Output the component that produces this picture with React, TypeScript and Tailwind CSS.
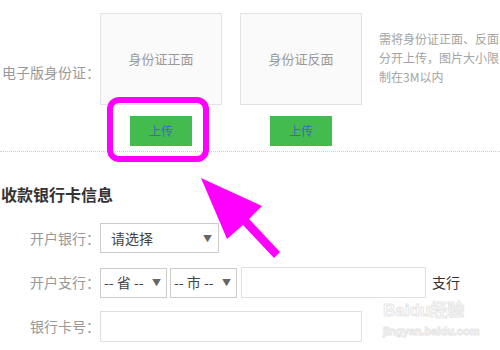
const font = "font-['Microsoft_YaHei','Noto_Sans_CJK_SC',sans-serif]";

function Caret() {
  return <span className="text-[9px] text-[#666] leading-none">▼</span>;
}

function UploadCol({ label }: { label: string }) {
  return (
    <div className="w-[122px] shrink-0 flex flex-col items-center">
      <div className="w-full h-[92px] border border-[#e3e3e3] bg-[#fafafa] flex items-center justify-center text-[13px] text-[#999]">
        {label}
      </div>
      <div className="mt-[11px] w-[62px] h-[30px] bg-[#43bb4f] flex items-center justify-center text-[12px] text-[#3f63d6]">
        上传
      </div>
    </div>
  );
}

export default function App() {
  return (
    <div className={`relative w-[500px] h-[350px] overflow-hidden bg-white ${font}`}>
      {/* 身份证上传 */}
      <div className="flex pt-[13px] h-[152px] border-b border-dotted border-[#cfcfcf]">
        <div className="w-[100px] shrink-0 pl-[2px] pt-[49px] text-[14px] leading-[20px] text-[#999] whitespace-nowrap">
          电子版身份证：
        </div>
        <UploadCol label="身份证正面" />
        <div className="w-[18px] shrink-0" />
        <UploadCol label="身份证反面" />
        <div className="ml-[17px] shrink-0 pt-[16px] text-[12px] leading-[19px] text-[#a3a3a3] whitespace-nowrap">
          需将身份证正面、反面
          <br />
          分开上传，图片大小限
          <br />
          制在3M以内
        </div>
      </div>

      {/* 收款银行卡信息 */}
      <div className="mt-[30px] pl-[1px] text-[16px] leading-[24px] font-bold text-[#333]">收款银行卡信息</div>

      <div className="mt-[17px] flex items-center h-[30px]">
        <div className="w-[100px] text-right text-[14px] text-[#999]">开户银行：</div>
        <div className="w-[119px] h-[30px] border border-[#ccc] flex items-center justify-between pl-[10px] pr-[6px] text-[14px] text-[#444]">
          请选择
          <Caret />
        </div>
      </div>

      <div className="mt-[14px] flex items-center h-[31px]">
        <div className="w-[100px] text-right text-[14px] text-[#999]">开户支行：</div>
        <div className="w-[67px] h-[30px] border border-[#ccc] flex items-center justify-between pl-[3px] pr-[5px] text-[14px] text-[#444]">
          -- 省 --
          <Caret />
        </div>
        <div className="ml-[3px] w-[67px] h-[30px] border border-[#ccc] flex items-center justify-between pl-[3px] pr-[5px] text-[14px] text-[#444]">
          -- 市 --
          <Caret />
        </div>
        <div className="ml-[4px] w-[185px] h-[31px] border border-[#e0e0e0]" />
        <div className="ml-[6px] text-[14px] text-[#333]">支行</div>
      </div>

      <div className="mt-[13px] flex items-center h-[31px]">
        <div className="w-[100px] text-right text-[14px] text-[#999]">银行卡号：</div>
        <div className="w-[262px] h-[31px] border border-[#e0e0e0]" />
      </div>

      {/* 水印 */}
      <div className="absolute left-[383px] top-[301px] flex flex-col items-start text-white [-webkit-text-stroke:1px_#e6e6e6] font-['Liberation_Sans','Noto_Sans_CJK_SC',sans-serif]">
        <div className="text-[17px] leading-[20px] font-bold">Baidu经验</div>
        <div className="mt-[4px] text-[11px] leading-[12px] font-bold">jingyan.baidu.com</div>
      </div>

      {/* 标注 */}
      <div className="absolute left-[107px] top-[97px] w-[102px] h-[65px] rounded-[12px] border-[6px] border-[#ff00ff]" />
      <svg className="absolute left-0 top-0" width="500" height="350" viewBox="0 0 500 350">
        <polygon
          points="201,178 262,206 249,219 280,252 274,258 243,225 227,239"
          fill="#ff00ff"
        />
      </svg>
    </div>
  );
}
